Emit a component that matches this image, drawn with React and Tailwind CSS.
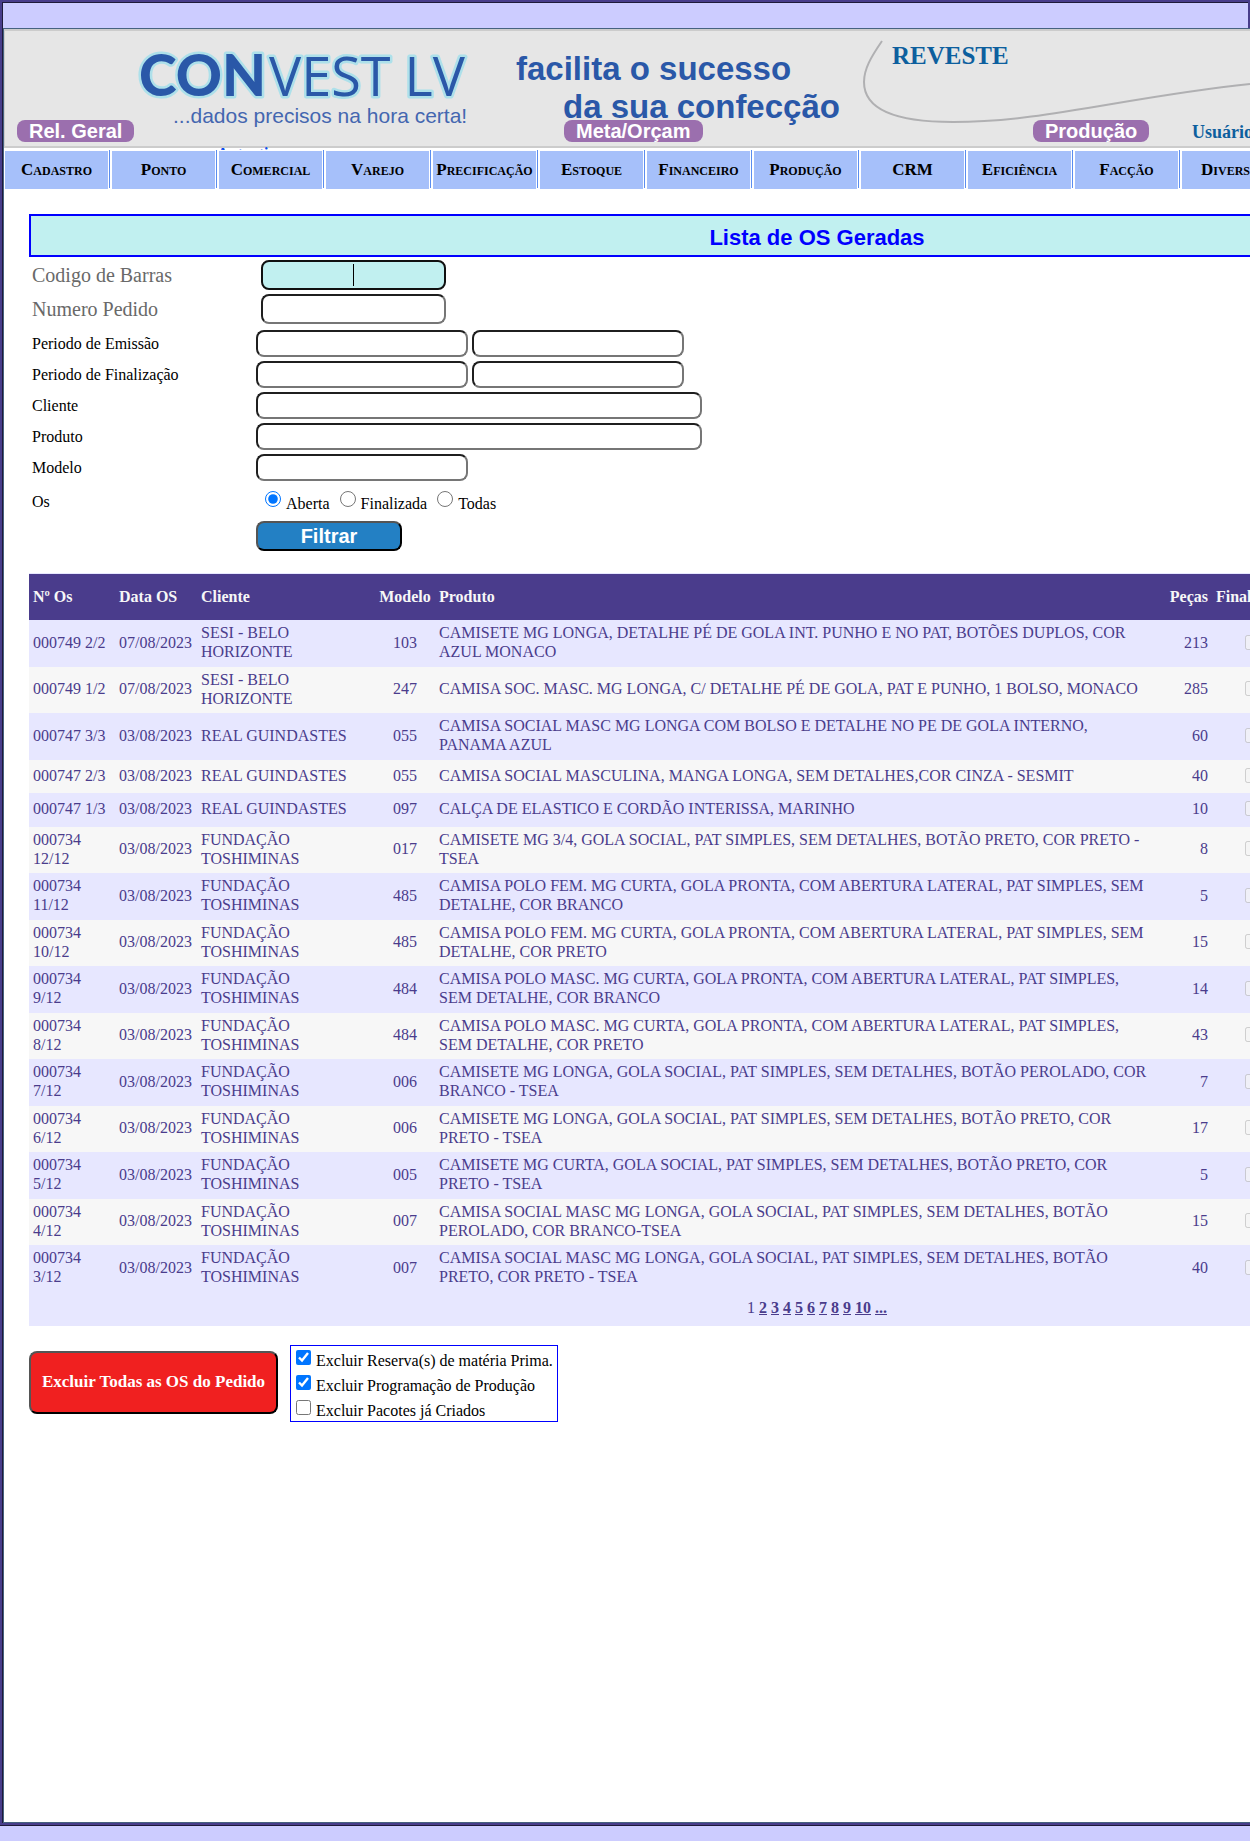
const MENU = [
  'Cadastro', 'Ponto', 'Comercial', 'Varejo', 'Precificação', 'Estoque', 'Financeiro', 'Produção',
  'CRM', 'Eficiência', 'Facção', 'Diversos',
];

const FUND = 'FUNDAÇÃO TOSHIMINAS';

const ROWS = [
  ['000749 2/2', '07/08/2023', 'SESI - BELO HORIZONTE', '103', 'CAMISETE MG LONGA, DETALHE PÉ DE GOLA INT. PUNHO E NO PAT, BOTÕES DUPLOS, COR AZUL MONACO', '213'],
  ['000749 1/2', '07/08/2023', 'SESI - BELO HORIZONTE', '247', 'CAMISA SOC. MASC. MG LONGA, C/ DETALHE PÉ DE GOLA, PAT E PUNHO, 1 BOLSO, MONACO', '285'],
  ['000747 3/3', '03/08/2023', 'REAL GUINDASTES', '055', 'CAMISA SOCIAL MASC MG LONGA COM BOLSO E DETALHE NO PE DE GOLA INTERNO, PANAMA AZUL', '60'],
  ['000747 2/3', '03/08/2023', 'REAL GUINDASTES', '055', 'CAMISA SOCIAL MASCULINA, MANGA LONGA, SEM DETALHES,COR CINZA - SESMIT', '40', 'h-[33px]'],
  ['000747 1/3', '03/08/2023', 'REAL GUINDASTES', '097', 'CALÇA DE ELASTICO E CORDÃO INTERISSA, MARINHO', '10', 'h-[34px]'],
  ['000734 12/12', '03/08/2023', FUND, '017', 'CAMISETE MG 3/4, GOLA SOCIAL, PAT SIMPLES, SEM DETALHES, BOTÃO PRETO, COR PRETO - TSEA', '8'],
  ['000734 11/12', '03/08/2023', FUND, '485', 'CAMISA POLO FEM. MG CURTA, GOLA PRONTA, COM ABERTURA LATERAL, PAT SIMPLES, SEM DETALHE, COR BRANCO', '5'],
  ['000734 10/12', '03/08/2023', FUND, '485', 'CAMISA POLO FEM. MG CURTA, GOLA PRONTA, COM ABERTURA LATERAL, PAT SIMPLES, SEM DETALHE, COR PRETO', '15'],
  ['000734 9/12', '03/08/2023', FUND, '484', 'CAMISA POLO MASC. MG CURTA, GOLA PRONTA, COM ABERTURA LATERAL, PAT SIMPLES, SEM DETALHE, COR BRANCO', '14'],
  ['000734 8/12', '03/08/2023', FUND, '484', 'CAMISA POLO MASC. MG CURTA, GOLA PRONTA, COM ABERTURA LATERAL, PAT SIMPLES, SEM DETALHE, COR PRETO', '43'],
  ['000734 7/12', '03/08/2023', FUND, '006', 'CAMISETE MG LONGA, GOLA SOCIAL, PAT SIMPLES, SEM DETALHES, BOTÃO PEROLADO, COR BRANCO - TSEA', '7'],
  ['000734 6/12', '03/08/2023', FUND, '006', 'CAMISETE MG LONGA, GOLA SOCIAL, PAT SIMPLES, SEM DETALHES, BOTÃO PRETO, COR PRETO - TSEA', '17'],
  ['000734 5/12', '03/08/2023', FUND, '005', 'CAMISETE MG CURTA, GOLA SOCIAL, PAT SIMPLES, SEM DETALHES, BOTÃO PRETO, COR PRETO - TSEA', '5'],
  ['000734 4/12', '03/08/2023', FUND, '007', 'CAMISA SOCIAL MASC MG LONGA, GOLA SOCIAL, PAT SIMPLES, SEM DETALHES, BOTÃO PEROLADO, COR BRANCO-TSEA', '15'],
  ['000734 3/12', '03/08/2023', FUND, '007', 'CAMISA SOCIAL MASC MG LONGA, GOLA SOCIAL, PAT SIMPLES, SEM DETALHES, BOTÃO PRETO, COR PRETO - TSEA', '40'],
];

const FIELD = 'rounded-lg border-2 border-t-[#1f1f1f] border-l-[#1f1f1f] border-b-[#767676] border-r-[#767676] bg-white px-1 text-base outline-none';

function Banner() {
  return (
    <svg className="absolute inset-0" width="1620" height="115" aria-label="Convest LV">
      <g fill="#2a58a8" stroke="#ade0ea" strokeWidth="5" strokeLinejoin="round" paintOrder="stroke">
        <text x="134" y="65" fontFamily="Lato, sans-serif" fontSize="57" fontWeight="900">CON</text>
        <text x="264" y="65" fontFamily="'Open Sans', 'Noto Sans', sans-serif" fontSize="54">VEST LV</text>
      </g>
      <text x="168" y="92" fill="#4466b0" fontFamily="'Liberation Sans', sans-serif" fontSize="21">...dados precisos na hora certa!</text>
      <g fill="#2a58a8" fontFamily="'Liberation Sans', sans-serif" fontSize="33" fontWeight="bold">
        <text x="511" y="49">facilita o sucesso</text>
        <text x="558" y="87">da sua confecção</text>
      </g>
      <path d="M877 10 C866 26 859 38 859 51 C859 80 895 91 948 91 C1040 91 1120 66 1245 53" fill="none" stroke="#b0b0b2" strokeWidth="2" />
    </svg>
  );
}

function Row({ label, id, big, children }) {
  return (
    <div className={big ? 'flex h-[34px] items-center text-xl text-[#696969]' : 'flex h-[31px] items-center text-base text-black'}>
      <label htmlFor={id} className={big ? 'w-[232px] pl-[3px]' : 'w-[227px] pl-[3px]'}>{label}</label>
      {children}
    </div>
  );
}

function PurpleButton({ children }) {
  return (
    <button type="button" className="block h-[22px] rounded-lg bg-[#9b6fae] px-3 font-['Liberation_Sans',sans-serif] text-xl leading-[22px] font-bold text-white">
      {children}
    </button>
  );
}

export default function App() {
  return (
    <div className="overflow-hidden bg-[#ccccff] pb-[15px] font-['Liberation_Serif',serif]">
      <div className="h-[28px] border-t-2 border-r-2 border-l-2 border-[#483d8b]">
        <div className="h-full border-t border-l border-[#1e1a3a]" />
      </div>
      <div className="min-w-[1632px] border-b border-[#1e1a3a]">
        <div className="border-b-2 border-l-2 border-[#483d8b]">
          <div className="border-l border-[#1e1a3a]">
            <div className="min-h-[1795px] border-t border-b border-l border-[#46627f] bg-white">
              <header className="relative h-[119px] border-t-2 border-b-2 border-l border-[#cccccc] bg-[#e6e6e6]">
                <Banner />
                <div className="relative flex h-full items-end pb-1 pl-3">
                  <div className="w-[547px]"><PurpleButton>Rel. Geral</PurpleButton></div>
                  <div className="w-[469px]"><PurpleButton>Meta/Orçam</PurpleButton></div>
                  <div className="w-[159px]"><PurpleButton>Produção</PurpleButton></div>
                  <span className="text-lg leading-5 font-bold text-[#0d5f9e]">Usuário:</span>
                </div>
                <h1 className="absolute top-[6px] left-[887px] text-[25px] font-bold text-[#0d5f9e]">REVESTE</h1>
                <div className="absolute top-[113px] left-[212px] h-[6px] overflow-hidden">
                  <a href="#autenticar" className="block text-base leading-5 font-bold text-[#0b4ff0]">Autentica</a>
                </div>
              </header>
              <nav className="mt-[2px] flex h-[39px]">
                {MENU.map((m) => (
                  <div key={m} className="flex w-[107px] shrink-0 pl-px">
                    <a href="#menu" className="mt-px flex w-[104px] items-center justify-center bg-[#a6c0fa] text-[17px] font-bold text-black [font-variant:small-caps]">{m}</a>
                    <span className="mr-px mb-px ml-px w-px bg-[#5b8def]" />
                  </div>
                ))}
              </nav>
              <main className="w-[1601px] pt-[25px] pl-[25px]">
                <h2 className="flex h-[43px] items-center justify-center border-2 border-[#0000ff] bg-[#c1f0f0] pt-[3px] font-['Liberation_Sans',sans-serif] text-[22px] font-bold text-[#0000ff]">
                  Lista de OS Geradas
                </h2>
                <form className="pt-px" onSubmit={(e) => e.preventDefault()}>
                  <Row label="Codigo de Barras" id="codigo" big>
                    <div className="relative flex">
                      <input id="codigo" className="h-[30px] w-[185px] rounded-lg border-2 border-[#101010] bg-[#c1f0f0] px-1 text-center outline-none" />
                      <span className="absolute top-1 left-[92px] h-[22px] w-px bg-black" />
                    </div>
                  </Row>
                  <Row label="Numero Pedido" id="pedido" big>
                    <input id="pedido" className={`h-[30px] w-[185px] ${FIELD}`} />
                  </Row>
                  <div className="pt-[2px]">
                    <Row label="Periodo de Emissão" id="emissao">
                      <div className="flex gap-1">
                        <input id="emissao" className={`h-[27px] w-[212px] ${FIELD}`} />
                        <input aria-label="Periodo de Emissão até" className={`h-[27px] w-[212px] ${FIELD}`} />
                      </div>
                    </Row>
                    <Row label="Periodo de Finalização" id="finalizacao">
                      <div className="flex gap-1">
                        <input id="finalizacao" className={`h-[27px] w-[212px] ${FIELD}`} />
                        <input aria-label="Periodo de Finalização até" className={`h-[27px] w-[212px] ${FIELD}`} />
                      </div>
                    </Row>
                    <Row label="Cliente" id="cliente"><input id="cliente" className={`h-[27px] w-[446px] ${FIELD}`} /></Row>
                    <Row label="Produto" id="produto"><input id="produto" className={`h-[27px] w-[446px] ${FIELD}`} /></Row>
                    <Row label="Modelo" id="modelo"><input id="modelo" className={`h-[27px] w-[212px] ${FIELD}`} /></Row>
                  </div>
                  <div className="flex h-[37px] items-center text-base text-black" role="radiogroup" aria-label="Os">
                    <span className="w-[236px] pl-[3px]">Os</span>
                    {['Aberta', 'Finalizada', 'Todas'].map((o, i) => (
                      <label key={o} className="mr-[10px] flex items-start pt-px">
                        <input type="radio" name="os" defaultChecked={i === 0} className="mt-px mr-[5px] h-4 w-4 accent-[#0075ff]" />
                        <span className="pt-1 leading-5">{o}</span>
                      </label>
                    ))}
                  </div>
                  <button type="submit" className="mt-px ml-[227px] block h-[30px] w-[146px] rounded-lg border-2 border-t-[#555] border-l-[#555] border-r-black border-b-black bg-[#2380c4] font-['Liberation_Sans',sans-serif] text-xl leading-none font-bold text-white">
                    Filtrar
                  </button>
                </form>
                <table className="mt-[22px] w-full table-fixed border-collapse border-t border-[#e7e7ff] text-left text-base leading-[19px] text-[#4a3c8c]">
                  <colgroup>
                    <col className="w-[86px]" /><col className="w-[82px]" /><col className="w-[178px]" /><col className="w-[60px]" />
                    <col className="w-[730px]" /><col className="w-[47px]" /><col className="w-[81px]" /><col />
                  </colgroup>
                  <thead>
                    <tr className="h-[46px] bg-[#4a3c8c] text-[#f7f7f7]">
                      <th className="px-1">Nº Os</th><th className="px-1">Data OS</th><th className="px-1">Cliente</th>
                      <th className="px-1 text-center">Modelo</th><th className="px-1">Produto</th>
                      <th className="px-1 text-right">Peças</th><th className="px-1">Finalizada</th><th />
                    </tr>
                  </thead>
                  <tbody>
                    {ROWS.map((r) => (
                      <tr key={r[0]} className={`odd:bg-[#e7e7ff] even:bg-[#f7f7f7] ${r[6] || 'odd:h-[47px] even:h-[46px]'}`}>
                        <td className="px-1 pb-[2px]">{r[0]}</td><td className="px-1 pb-[2px]">{r[1]}</td>
                        <td className="px-1 pb-[2px]">{r[2]}</td><td className="px-1 pb-[2px] text-center">{r[3]}</td>
                        <td className="pr-[14px] pb-[2px] pl-1">{r[4]}</td><td className="px-1 pb-[2px] text-right">{r[5]}</td>
                        <td className="px-1 pb-[2px]"><input type="checkbox" disabled aria-label={`Finalizada ${r[0]}`} className="mx-auto block h-[15px] w-[15px]" /></td>
                        <td />
                      </tr>
                    ))}
                  </tbody>
                  <tfoot>
                    <tr className="h-[34px] bg-[#e7e7ff]">
                      <td colSpan={8} className="pb-[2px] text-center">
                        1{['2', '3', '4', '5', '6', '7', '8', '9', '10', '...'].map((p) => (
                          <span key={p}> <a href="#pagina" className="font-bold underline">{p}</a></span>
                        ))}
                      </td>
                    </tr>
                  </tfoot>
                </table>
                <div className="mt-[19px] flex items-start">
                  <button type="button" className="mt-[6px] h-[63px] w-[249px] rounded-lg border-2 border-t-[#555] border-l-[#555] border-r-black border-b-black bg-[#f02020] text-[17px] font-bold text-white">
                    Excluir Todas as OS do Pedido
                  </button>
                  <div className="ml-3 h-[77px] w-[268px] border border-[#0000ff] pl-[5px] text-base text-black">
                    {['Excluir Reserva(s) de matéria Prima.', 'Excluir Programação de Produção', 'Excluir Pacotes já Criados'].map((t, i) => (
                      <label key={t} className="flex h-[25px] items-start whitespace-nowrap">
                        <input type="checkbox" defaultChecked={i < 2} className="mt-1 mr-[5px] h-[15px] w-[15px] accent-[#0075ff]" />
                        <span className="pt-1 leading-[22px]">{t}</span>
                      </label>
                    ))}
                  </div>
                </div>
              </main>
            </div>
          </div>
        </div>
      </div>
    </div>
  );
}
